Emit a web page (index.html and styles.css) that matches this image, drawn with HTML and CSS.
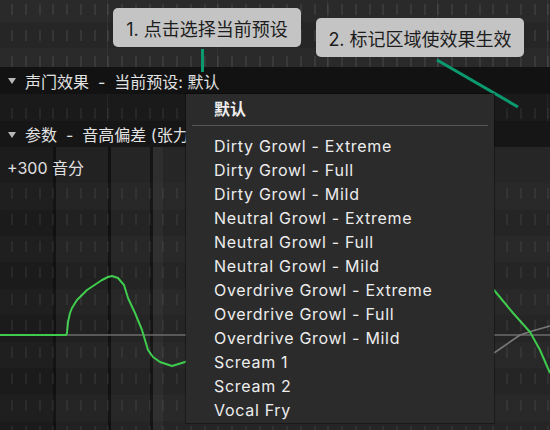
FILE: index.html
```html
<!DOCTYPE html>
<html lang="zh">
<head>
<meta charset="utf-8">
<title>声门效果</title>
<link rel="stylesheet" href="styles.css">
</head>
<body>
<div class="app">
  <div class="lane lane-top"></div>
  <div class="track-header header-main">
    <span class="tri"></span><span class="title">声门效果  -  当前预设: 默认</span>
  </div>
  <div class="lane lane-mid"></div>
  <div class="track-header header-param">
    <span class="tri"></span><span class="title">参数  -  音高偏差 (张力)</span>
  </div>
  <div class="graph">
    <div class="cols">
      <div class="col c1"></div>
      <div class="col sep"></div>
      <div class="col c2"></div>
      <div class="col sep"></div>
      <div class="col c3"></div>
      <div class="col sep sep2"></div>
      <div class="col c4"></div>
      <div class="col c5"></div>
    </div>
    <div class="graph-bands"></div>
    <div class="graph-ticks"></div>
    <svg class="curves" viewBox="0 0 550 283" width="550" height="283">
      <path d="M66 188 H550" stroke="#6c6c6c" stroke-width="1.6" fill="none"/>
      <path d="M380 250 Q450 222 494 206 L520 188 Q535 183 550 179" stroke="#7a7a7a" stroke-width="1.6" fill="none"/>
      <path d="M0 188 L66 188 L67 186 L68 175 L70 166 L72 161 L77 153 L87 143 L102 133 L108 130 L112 129 L118 131 L124 138 L128 151 L135 166 L142 183 L148 203 L153 210 L160 215 L172 219 L185 215 L250 190 L400 170 L494 143 L513 166 L530 185 L540 203 L550 226" stroke="#3fcc4e" stroke-width="2" fill="none" stroke-linejoin="round"/>
    </svg>
    <span class="graph-label">+300 音分</span>
  </div>

  <svg class="pointers" viewBox="0 0 550 430" width="550" height="430">
    <line x1="202.5" y1="49" x2="202.5" y2="72" stroke="#0b9a70" stroke-width="3"/>
    <line x1="437" y1="60" x2="518" y2="107" stroke="#0b9a70" stroke-width="3"/>
  </svg>
  <div class="tip tip1">1. 点击选择当前预设</div>
  <div class="tip tip2">2. 标记区域使效果生效</div>

  <div class="menu">
    <div class="menu-head">默认</div>
    <div class="menu-sep"></div>
    <ul class="menu-list">
      <li>Dirty Growl - Extreme</li>
      <li>Dirty Growl - Full</li>
      <li>Dirty Growl - Mild</li>
      <li>Neutral Growl - Extreme</li>
      <li>Neutral Growl - Full</li>
      <li>Neutral Growl - Mild</li>
      <li>Overdrive Growl - Extreme</li>
      <li>Overdrive Growl - Full</li>
      <li>Overdrive Growl - Mild</li>
      <li>Scream 1</li>
      <li>Scream 2</li>
      <li>Vocal Fry</li>
    </ul>
  </div>
</div>
</body>
</html>
```

FILE: styles.css
```css
* { box-sizing: border-box; }
html, body { margin: 0; padding: 0; background: #1a1a1a; }
body { font-family: Inter, "Noto Sans CJK SC", sans-serif; }

.app {
  position: relative;
  width: 550px;
  height: 430px;
  overflow: hidden;
  display: flex;
  flex-direction: column;
  background: #1a1a1a;
}

.lane {
  position: relative;
  flex: none;
}
.lane::before {
  content: "";
  position: absolute;
  inset: 0;
  background: repeating-linear-gradient(to right, transparent 0 11px, var(--tick) 11px 13px, transparent 13px 13.75px);
  -webkit-mask-image: repeating-linear-gradient(to bottom, transparent 0 var(--t0), #000 var(--t0) var(--t1), transparent var(--t1) var(--period));
  mask-image: repeating-linear-gradient(to bottom, transparent 0 var(--t0), #000 var(--t0) var(--t1), transparent var(--t1) var(--period));
}

.lane-top {
  height: 67px;
  --tick: rgba(255,255,255,0.075);
  --t0: 4px; --t1: 15px; --period: 26px;
  background:
    repeating-linear-gradient(to right, transparent 0 107px, #343434 107px 108px, transparent 108px 110px),
    linear-gradient(to bottom, #2a2a2a 0 22px, #262626 22px 48px, #2a2a2a 48px 67px);
}

.lane-mid {
  height: 27px;
  --tick: rgba(255,255,255,0.06);
  --t0: 14px; --t1: 25px; --period: 27px;
  background:
    repeating-linear-gradient(to right, transparent 0 107px, #262626 107px 108px, transparent 108px 110px),
    #1a1a1a;
}

.track-header {
  flex: none;
  height: 27px;
  display: flex;
  align-items: center;
  padding-left: 8px;
  color: #e2e2e2;
  font-size: 16px;
  white-space: pre;
}
.header-main { background: #121212; }
.header-param { background: #161616; height: 26px; }
.tri {
  width: 0;
  height: 0;
  border-left: 4.5px solid transparent;
  border-right: 4.5px solid transparent;
  border-top: 6px solid #b8b8b8;
  margin-right: 9px;
  margin-top: 1px;
}

.graph {
  flex: 1;
  display: grid;
  position: relative;
}
.graph > * { grid-area: 1 / 1; }

.cols { display: flex; }
.col { height: 100%; }
.c1 { width: 53px; background: #1c1c1c; }
.sep { width: 3px; background: #111111; }
.c2 { width: 52px; background: #222222; }
.c3 { width: 39px; background: #252525; }
.sep2 { background: #141414; }
.c4 { width: 10px; background: #2e2e2e; }
.c5 { flex: 1; background: #262626; }

.graph-bands {
  margin-top: 36px;
  background: repeating-linear-gradient(to bottom, rgba(255,255,255,0.012) 0 26.5px, rgba(0,0,0,0.04) 26.5px 53px);
}

.graph-ticks {
  margin-top: 41px;
  background:
    repeating-linear-gradient(to right, transparent 0 11px, rgba(255,255,255,0.06) 11px 13px, transparent 13px 13.75px);
  -webkit-mask-image: repeating-linear-gradient(to bottom, #000 0 11px, transparent 11px 26.5px);
  mask-image: repeating-linear-gradient(to bottom, #000 0 11px, transparent 11px 26.5px);
}

.curves { display: block; }

.graph-label {
  align-self: start;
  justify-self: start;
  margin: 10px 0 0 7px;
  color: #e0e0e0;
  font-size: 16px;
  line-height: 22px;
}

.pointers {
  position: absolute;
  left: 0;
  top: 0;
  pointer-events: none;
}

.tip {
  position: absolute;
  height: 39px;
  display: flex;
  align-items: center;
  justify-content: center;
  background: #c4c4c4;
  border-radius: 5px;
  color: #1d1d1d;
  font-size: 18px;
  white-space: nowrap;
}
.tip1 { left: 113px; top: 8px; width: 188px; }
.tip2 { left: 316px; top: 18px; width: 208px; }

.menu {
  position: absolute;
  left: 186px;
  top: 94px;
  width: 308px;
  height: 329px;
  background: #2b2b2b;
  box-shadow: 0 0 0 1px rgba(0,0,0,0.35);
  padding-top: 3px;
  color: #ededed;
  font-size: 16px;
}
.menu-head {
  height: 24px;
  line-height: 24px;
  padding-left: 28px;
  font-weight: 700;
}
.menu-sep {
  height: 1px;
  margin: 4px 6px 8px;
  background: #555555;
}
.menu-list {
  list-style: none;
  margin: 0;
  padding: 0;
}
.menu-list li {
  height: 24px;
  line-height: 24px;
  padding-left: 28px;
  white-space: nowrap;
  letter-spacing: 0.7px;
}
```
